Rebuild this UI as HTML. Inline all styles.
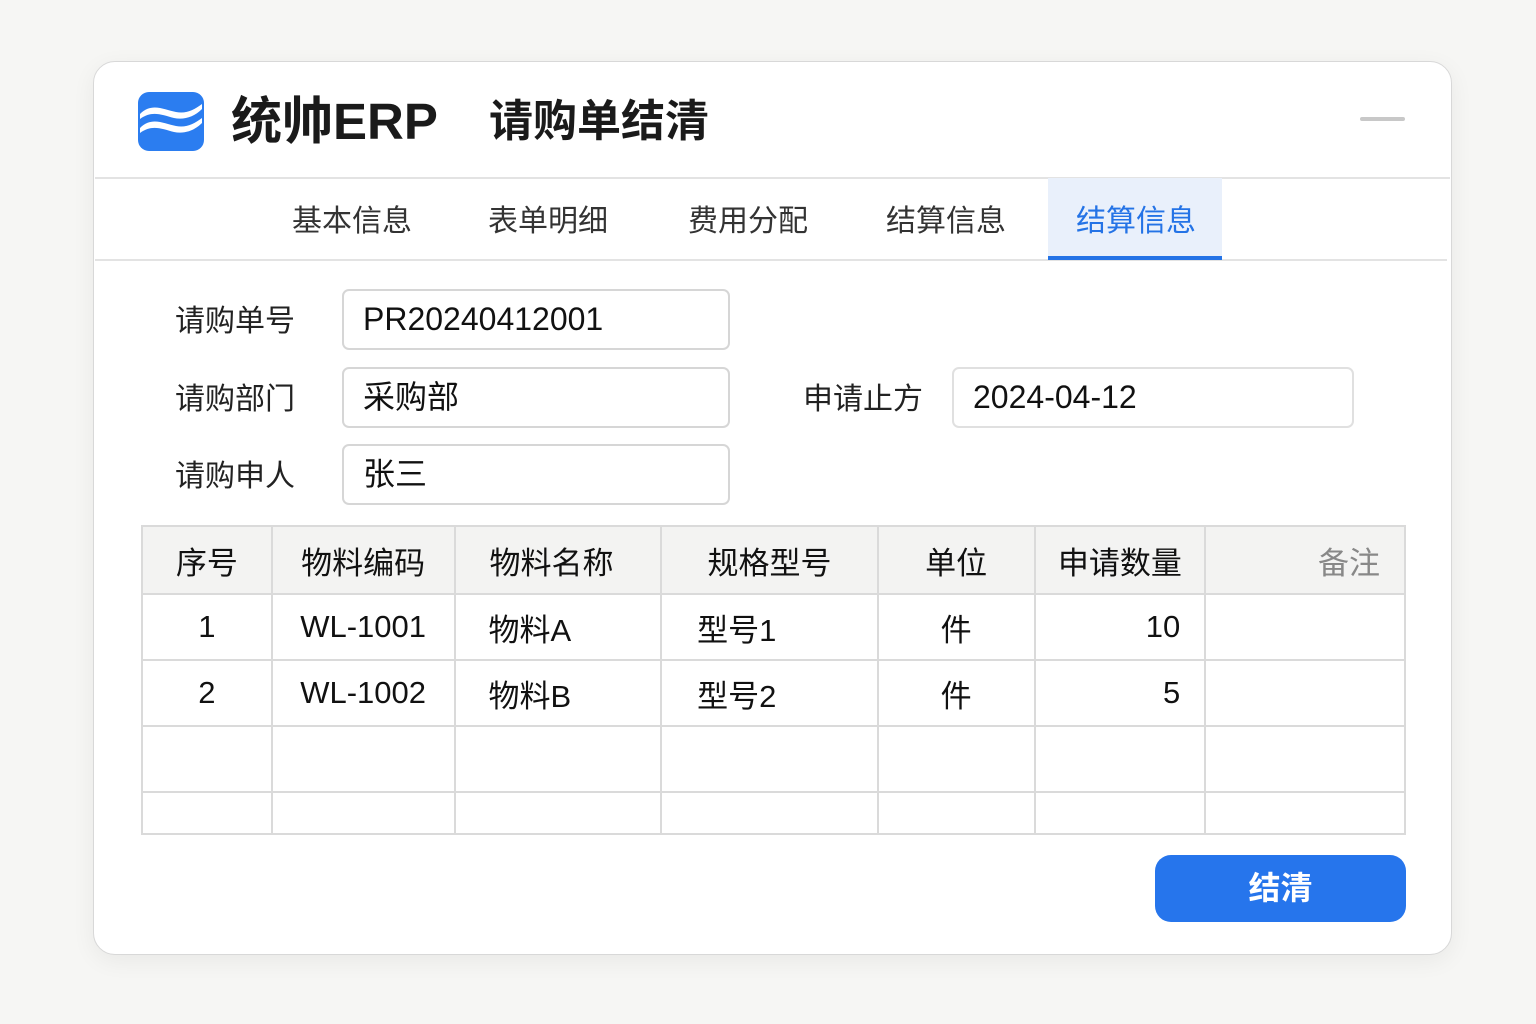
<!DOCTYPE html>
<html><head><meta charset="utf-8"><style>
*{margin:0;padding:0;box-sizing:border-box}
body{width:1536px;height:1024px;background:#f6f6f4;position:relative;font-family:"Liberation Sans","Noto Sans CJK SC",sans-serif;color:#222;overflow:hidden}
.card{position:absolute;left:93px;top:61px;width:1359px;height:894px;background:#fff;border:1.5px solid #d8d8d8;border-radius:22px;box-shadow:0 6px 24px rgba(0,0,0,.06)}
.a{position:absolute;white-space:nowrap}
.tab{position:absolute;top:181px;height:82px;line-height:82px;font-size:30px;color:#333;transform:translateX(-50%)}
.lab{position:absolute;left:175px;font-size:30px;color:#222}
.inp{position:absolute;border:2px solid #d6d6d6;border-radius:7px;font-size:32px;padding-left:19px;color:#111}
table{position:absolute;left:141px;top:525px;width:1265px;border-collapse:collapse}
td{border:2px solid #dadada;font-size:31px;color:#111}
</style></head><body>
<div class="card"></div>
<svg class="a" style="left:138px;top:92px" width="66" height="59" viewBox="0 0 66 59">
<rect width="66" height="59" rx="11" fill="#2b7df0"/>
<path d="M2 22 C14 10,26 18,38 20 C48 22,56 18,64 12 L64 17 C56 25,46 28,36 26 C24 23,14 18,2 27Z" fill="#fff"/>
<path d="M2 36 C14 24,26 32,38 34 C48 36,56 32,64 26 L64 31 C56 39,46 42,36 40 C24 37,14 32,2 41Z" fill="#fff"/>
</svg>
<div class="a" style="left:231px;top:90px;font-size:51px;font-weight:bold;color:#1a1a1a;line-height:64px">统帅ERP</div>
<div class="a" style="left:489px;top:90px;font-size:44px;font-weight:bold;color:#1a1a1a;line-height:64px">请购单结清</div>
<div class="a" style="left:1360px;top:117px;width:45px;height:4px;background:#c8c8c8;border-radius:2px"></div>
<div class="a" style="left:95px;top:177px;width:1355px;height:2px;background:#e3e3e3"></div>
<div class="a" style="left:95px;top:259px;width:1352px;height:2px;background:#e3e3e3"></div>
<div class="a" style="left:1048px;top:178px;width:174px;height:82px;background:#e9f0fb;border-bottom:4px solid #2473e6"></div>
<div class="tab" style="left:352px">基本信息</div>
<div class="tab" style="left:548px">表单明细</div>
<div class="tab" style="left:748px">费用分配</div>
<div class="tab" style="left:946px">结算信息</div>
<div class="tab" style="left:1136px;color:#2473e6">结算信息</div>
<div class="lab" style="top:296px">请购单号</div>
<div class="lab" style="top:374px">请购部门</div>
<div class="lab" style="top:451px">请购申人</div>
<div class="lab" style="left:803px;top:374px">申请止方</div>
<div class="inp" style="left:342px;top:289px;width:388px;height:61px;line-height:57px">PR20240412001</div>
<div class="inp" style="left:342px;top:367px;width:388px;height:61px;line-height:57px">采购部</div>
<div class="inp" style="left:342px;top:444px;width:388px;height:61px;line-height:57px">张三</div>
<div class="inp" style="left:952px;top:367px;width:402px;height:61px;line-height:57px;border-color:#e0e0e0">2024-04-12</div>
<table>
<colgroup><col style="width:130px"><col style="width:183px"><col style="width:207px"><col style="width:217px"><col style="width:157px"><col style="width:171px"><col style="width:200px"></colgroup>
<tr style="height:68px;background:#f3f3f2"><td style="text-align:center">序号</td><td style="text-align:center">物料编码</td><td style="padding-left:34px">物料名称</td><td style="text-align:center">规格型号</td><td style="text-align:center">单位</td><td style="text-align:center">申请数量</td><td style="text-align:right;padding-right:24px;color:#888">备注</td></tr>
<tr style="height:66px"><td style="text-align:center">1</td><td style="text-align:center">WL-1001</td><td style="padding-left:33px">物料A</td><td style="padding-left:35px">型号1</td><td style="text-align:center">件</td><td style="text-align:right;padding-right:24px">10</td><td></td></tr>
<tr style="height:66px"><td style="text-align:center">2</td><td style="text-align:center">WL-1002</td><td style="padding-left:33px">物料B</td><td style="padding-left:35px">型号2</td><td style="text-align:center">件</td><td style="text-align:right;padding-right:24px">5</td><td></td></tr>
<tr style="height:66px"><td></td><td></td><td></td><td></td><td></td><td></td><td></td></tr>
<tr style="height:42px"><td></td><td></td><td></td><td></td><td></td><td></td><td></td></tr>
</table>
<div class="a" style="left:1155px;top:855px;width:251px;height:67px;background:#2675ec;border-radius:16px;color:#fff;font-size:32px;font-weight:bold;text-align:center;line-height:67px">结清</div>
</body></html>
